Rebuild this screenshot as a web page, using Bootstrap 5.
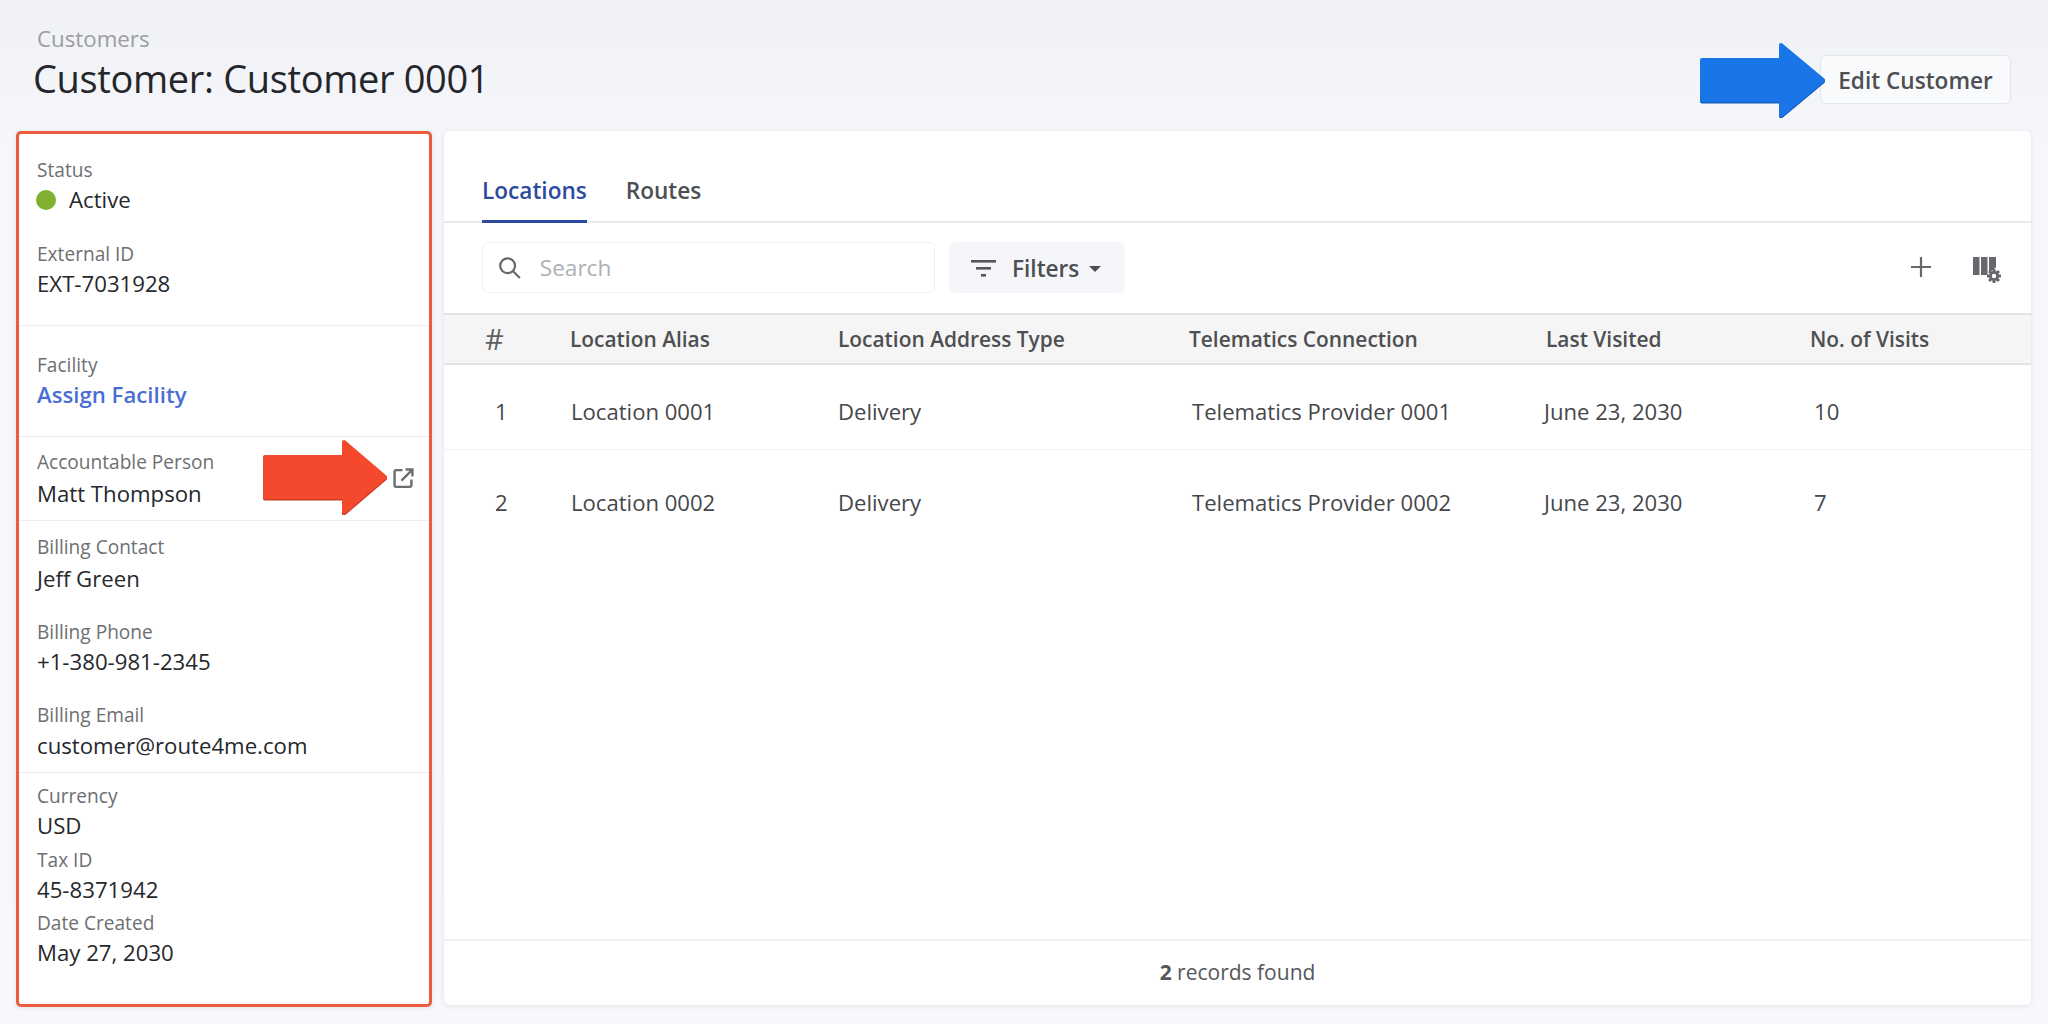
<!DOCTYPE html>
<html lang="en">
<head>
<meta charset="utf-8">
<title>Customer: Customer 0001</title>
<link href="https://cdn.jsdelivr.net/npm/bootstrap@5.3.0/dist/css/bootstrap.min.css" rel="stylesheet">
<style>
html,body{height:100%}
body{font-family:"Open Sans",sans-serif;background:linear-gradient(180deg,#eff1f6 0,#f6f7fb 14%,#f7f8fb 100%);color:#2a2c30;overflow:hidden}
.pg{position:relative;width:2048px;height:1024px;padding:0 17px 17px 16px;display:flex;flex-direction:column}
.hdr{height:131px;display:flex;justify-content:space-between;padding:0 20px 0 17px}
.crumb{font-size:22.3px;line-height:28px;color:#9b9da1;margin-top:25px;padding-left:4px}
.ttl{font-size:38px;line-height:50px;font-weight:400;color:#24262a;margin:0;letter-spacing:-.35px}
.edit-btn{font-size:22.6px;font-weight:600;color:#4d4f52;background:#f9fafc;border:1px solid #e3e5ec;border-radius:6px;height:49px;width:191px;padding:2px 0 0;margin-top:55px}
.main{flex:1;display:flex;gap:12px;min-height:0}
.side{width:416px;height:876px;border:3px solid #ec5b3d;border-radius:5px;background:#fff;box-shadow:0 1px 5px rgba(60,70,100,.12)}
.sec{border-bottom:1px solid #eceef1;padding:0 15px 0 18px;position:relative}
.sec:last-child{border-bottom:0}
.s1{height:192px;padding-top:23px}
.s2{height:111px;padding-top:26px}
.s3{height:84px;padding-top:12px}
.s4{height:252px;padding-top:13px}
.s5{padding-top:10px}
.fl{font-size:19.1px;line-height:26px;color:#6d6f73}
.fv{font-size:22.2px;line-height:34px;color:#26282c}
.s3 .fv{padding-top:2px}
.s4 .fld:first-child .fv{padding-top:2px}
.s4 .fld:last-child .fv{padding-top:1px}
.fld{height:60px}
.s1 .fld+.fld{margin-top:24px}
.s4 .fld+.fld{margin-top:25px}
.s4 .fld:last-child{margin-top:23px}
.s5 .fld+.fld{margin-top:3.5px}
.dot{width:20px;height:20px;border-radius:50%;background:#7fb02f;margin-right:13px;margin-left:-1px;flex:none}
.assign{font-weight:600;color:#4a6ed3;text-decoration:none}
.ext{position:absolute;right:15px;top:31px;width:21px;height:21px}
.panel{flex:1;height:874px;border:0;border-radius:6px;background:#fff;box-shadow:0 1px 5px rgba(60,70,100,.12);display:flex;flex-direction:column;overflow:hidden}
.tabs{height:92px;border-bottom:2px solid #e8e9ec;padding:0 38px;display:flex;gap:39px;align-items:flex-end;margin:0;list-style:none}
.tabs a{display:block;font-size:22.6px;font-weight:600;line-height:30px;color:#4d4f52;text-decoration:none;padding-bottom:14px;margin-bottom:-2px;border-bottom:3px solid transparent}
.tabs a.active{color:#2d4a9e;border-bottom-color:#2d4a9e;border-top-left-radius:2px}
.tools{height:90px;display:flex;align-items:flex-start;padding:19px 0 0 38px;gap:14px}
.srch{width:453px;height:51px;border:1px solid #eef0f3;border-radius:6px;display:flex;align-items:center;padding:0 0 0 16px;gap:19px}
.srch input{border:0;outline:0;padding:1px 0 0;box-shadow:none;font-size:22.6px;color:#333;background:transparent}
.srch input::placeholder{color:#adb0b4;opacity:1}
.flt{width:176px;height:51px;background:#f4f6fa;border:0;border-radius:6px;font-size:22.6px;font-weight:600;color:#4d4f52;display:flex;align-items:center;padding:2px 0 0 22px;gap:16px}
.flt .crt{width:0;height:0;border-left:6px solid transparent;border-right:6px solid transparent;border-top:6px solid #4d4f52;margin-left:-6px}
.acts{margin-left:auto;display:flex;align-items:flex-start;gap:42px;padding:15px 26px 0 0}
.tbl-wrap{flex:1}
.cust-tbl{table-layout:fixed;width:100%;margin:0;color:#3a3c40}
.cust-tbl th{background:#f5f5f5;font-size:20.9px;font-weight:600;color:#4d4f52;height:50px;padding:0 0 1px;vertical-align:middle;border-top:2px solid #e2e3e5;border-bottom:2px solid #e2e3e5;line-height:30px}
.cust-tbl td{font-size:22.1px;line-height:30px;padding:31px 0 23px;border-bottom:1px solid #f1f2f4;color:#45474b}
.cust-tbl tr.lastr td{border-bottom:0;padding-top:37px}
.cust-tbl th.c1{padding-left:41px;font-size:29px;font-weight:400;color:#5d5f63}
.cust-tbl td.c1{padding-left:51px}
.cust-tbl td.c2{padding-left:1px}
.cust-tbl td.c4{padding-left:3px}
.cust-tbl th.c5{padding-left:2px}
.cust-tbl td.c6{padding-left:4px}
.w1{width:126px}.w2{width:268px}.w3{width:351px}.w4{width:355px}.w5{width:266px}
.foot{height:66px;border-top:2px solid #eef0f2;display:flex;align-items:center;justify-content:center;font-size:21px;color:#55575b}
.arr{position:absolute;z-index:5}
.arr-b{left:1700px;top:43px;width:127px;height:75px}
.arr-r{left:263px;top:440px;width:126px;height:75px}
</style>
</head>
<body>
<div class="pg">
  <div class="hdr">
    <div>
      <div class="crumb">Customers</div>
      <h1 class="ttl">Customer: Customer 0001</h1>
    </div>
    <button type="button" class="btn edit-btn">Edit Customer</button>
  </div>
  <div class="main">
    <aside class="side">
      <div class="sec s1">
        <div class="fld"><div class="fl">Status</div><div class="fv d-flex align-items-center"><span class="dot"></span>Active</div></div>
        <div class="fld"><div class="fl">External ID</div><div class="fv">EXT-7031928</div></div>
      </div>
      <div class="sec s2">
        <div class="fld"><div class="fl">Facility</div><div class="fv"><a href="#" class="assign">Assign Facility</a></div></div>
      </div>
      <div class="sec s3">
        <div class="fld"><div class="fl">Accountable Person</div><div class="fv">Matt Thompson</div></div>
        <svg class="ext" viewBox="0 0 20 20" fill="none" stroke="#6b6d71" stroke-width="2.300"><path d="M9 2H3a1.500 1.500 0 0 0-1.500 1.500v13A1.500 1.500 0 0 0 3 18h13a1.500 1.500 0 0 0 1.500-1.500V11"/><path d="M12 1.500h6.500V8M18 2 8 12"/></svg>
      </div>
      <div class="sec s4">
        <div class="fld"><div class="fl">Billing Contact</div><div class="fv">Jeff Green</div></div>
        <div class="fld"><div class="fl">Billing Phone</div><div class="fv">+1-380-981-2345</div></div>
        <div class="fld"><div class="fl">Billing Email</div><div class="fv">customer@route4me.com</div></div>
      </div>
      <div class="sec s5">
        <div class="fld"><div class="fl">Currency</div><div class="fv">USD</div></div>
        <div class="fld"><div class="fl">Tax ID</div><div class="fv">45-8371942</div></div>
        <div class="fld"><div class="fl">Date Created</div><div class="fv">May 27, 2030</div></div>
      </div>
    </aside>
    <section class="panel">
      <ul class="tabs">
        <li><a href="#" class="active">Locations</a></li>
        <li><a href="#">Routes</a></li>
      </ul>
      <div class="tools">
        <div class="srch">
          <svg width="24" height="24" viewBox="0 0 24 24" fill="none" stroke="#66686c" stroke-width="2.400"><circle cx="9.500" cy="9.500" r="8.200"/><path d="m15.500 15.500 7.500 7.500"/></svg>
          <input type="text" class="form-control" placeholder="Search" aria-label="Search">
        </div>
        <button type="button" class="flt">
          <svg width="25" height="17" viewBox="0 0 25 17" fill="#55575b"><rect width="25" height="2.600"/><rect x="5" y="7" width="15" height="2.600"/><rect x="10" y="14" width="5" height="2.600"/></svg>
          Filters<span class="crt"></span>
        </button>
        <div class="acts">
          <svg width="20" height="20" viewBox="0 0 20 20" stroke="#66686c" stroke-width="2.200"><path d="M10 0v20M0 10h20"/></svg>
          <svg width="32" height="29" viewBox="0 0 32 29"><path fill="#66686c" d="M0 0h6.500v18H0zM8 0h6.500v18H8zM16 0h7v10.500l-7 5z"/><g transform="translate(21 19)" fill="#66686c"><circle r="5"/><path d="M-1.500-7h3v14h-3zM-7-1.500h14v3h-14z"/><path d="M-1.500-7h3v14h-3z" transform="rotate(45)"/><path d="M-1.500-7h3v14h-3z" transform="rotate(-45)"/><circle r="2.200" fill="#fff"/></g></svg>
        </div>
      </div>
      <div class="tbl-wrap">
        <table class="table cust-tbl">
          <colgroup><col class="w1"><col class="w2"><col class="w3"><col class="w4"><col class="w5"><col></colgroup>
          <thead>
            <tr><th class="c1">#</th><th>Location Alias</th><th>Location Address Type</th><th>Telematics Connection</th><th class="c5">Last Visited</th><th>No. of Visits</th></tr>
          </thead>
          <tbody>
            <tr><td class="c1">1</td><td class="c2">Location 0001</td><td>Delivery</td><td class="c4">Telematics Provider 0001</td><td>June 23, 2030</td><td class="c6">10</td></tr>
            <tr class="lastr"><td class="c1">2</td><td class="c2">Location 0002</td><td>Delivery</td><td class="c4">Telematics Provider 0002</td><td>June 23, 2030</td><td class="c6">7</td></tr>
          </tbody>
        </table>
      </div>
      <div class="foot"><span><b class="fw-bold">2</b> records found</span></div>
    </section>
  </div>
  <svg class="arr arr-b" viewBox="0 0 127 75"><path fill="#135fc0" stroke="#135fc0" stroke-width="4" stroke-linejoin="round" d="M2 18.500H81V3.500L123 38.500 81 73.500V58.500H2Z"/><path fill="#1a76e8" stroke="#1a76e8" stroke-width="4" stroke-linejoin="round" d="M2 17H81V2L123 37 81 72V57H2Z"/></svg>
  <svg class="arr arr-r" viewBox="0 0 126 75"><path fill="#c93a20" stroke="#c93a20" stroke-width="4" stroke-linejoin="round" d="M2 18.500H81V3.500L122 38.500 81 73.500V58.500H2Z"/><path fill="#f4492d" stroke="#f4492d" stroke-width="4" stroke-linejoin="round" d="M2 17H81V2L122 37 81 72V57H2Z"/></svg>
</div>
<script src="https://cdn.jsdelivr.net/npm/bootstrap@5.3.0/dist/js/bootstrap.bundle.min.js"></script>
</body>
</html>
